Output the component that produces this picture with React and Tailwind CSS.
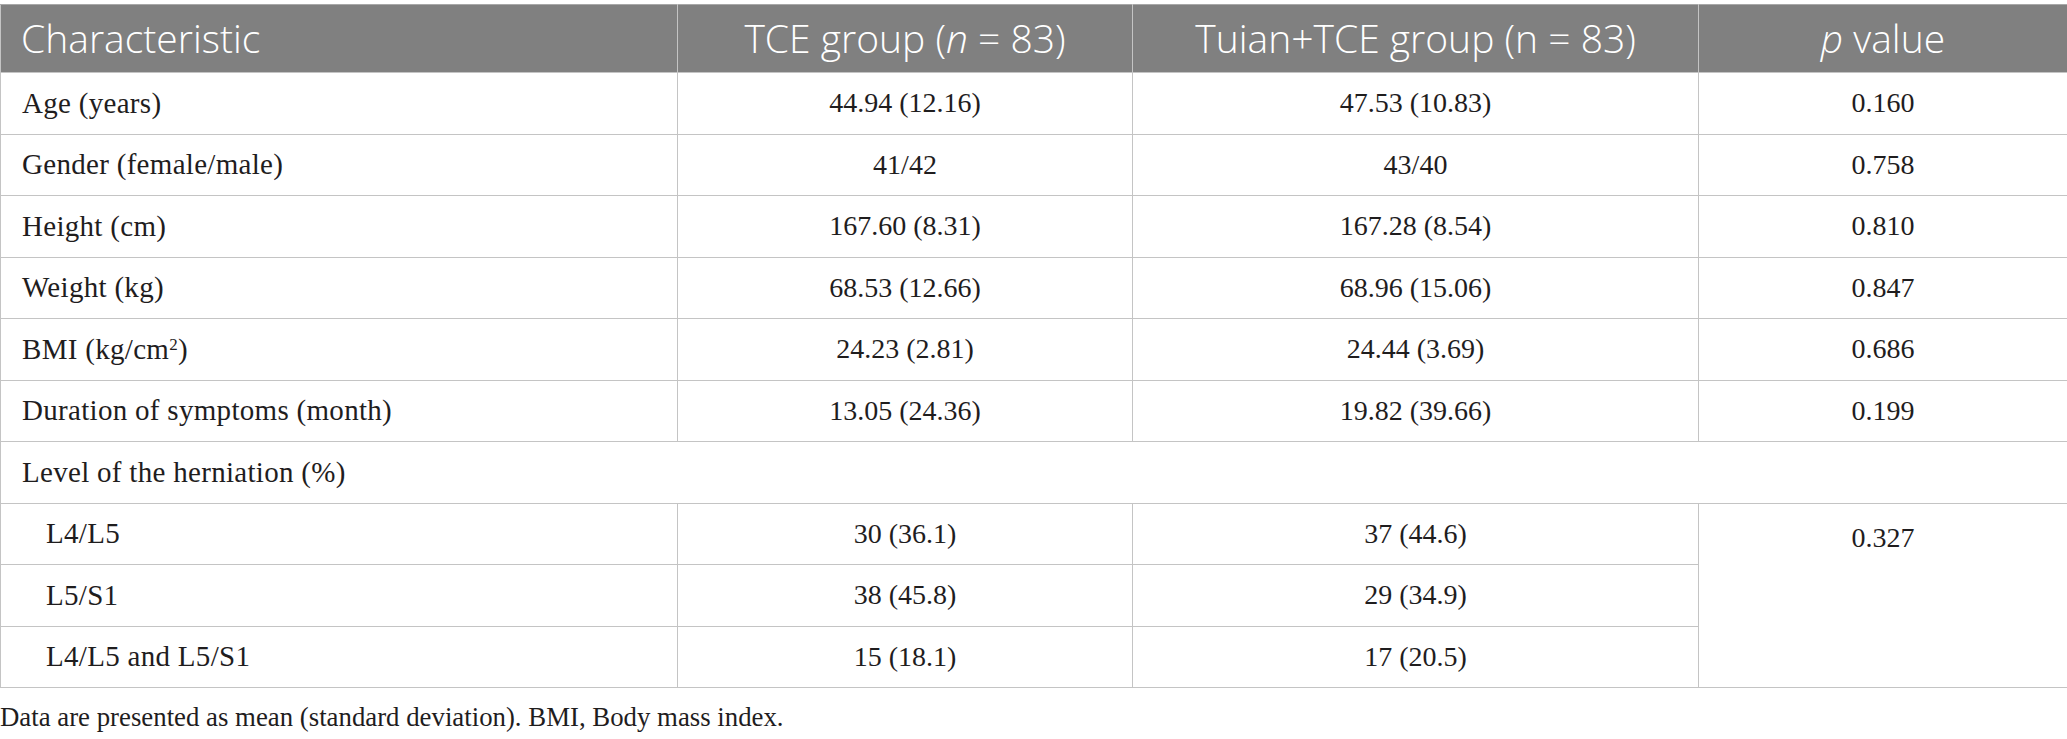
import React from "react";

const rows = [
  ["Age (years)", "44.94 (12.16)", "47.53 (10.83)", "0.160"],
  ["Gender (female/male)", "41/42", "43/40", "0.758"],
  ["Height (cm)", "167.60 (8.31)", "167.28 (8.54)", "0.810"],
  ["Weight (kg)", "68.53 (12.66)", "68.96 (15.06)", "0.847"],
  [
    <>
      BMI (kg/cm<sup className="text-[17px]">2</sup>)
    </>,
    "24.23 (2.81)",
    "24.44 (3.69)",
    "0.686",
  ],
  ["Duration of symptoms (month)", "13.05 (24.36)", "19.82 (39.66)", "0.199"],
];

const levels = [
  ["L4/L5", "30 (36.1)", "37 (44.6)"],
  ["L5/S1", "38 (45.8)", "29 (34.9)"],
  ["L4/L5 and L5/S1", "15 (18.1)", "17 (20.5)"],
];

const cell = "border border-[#c4c4c4] h-[61.5px] align-middle";
const label = `${cell} text-[29px] tracking-[0.3px]`;
const th = "border border-[#c4c4c4] border-t-[#a8a8a8] font-light";
const serif = { fontFamily: '"Liberation Serif", serif' };

export default function App() {
  return (
    <div className="w-[2067px] h-[739px] bg-white pt-[4px] text-[#1f1d1e]" style={serif}>
      <table className="w-[2067px] table-fixed border-collapse text-[28px]">
        <colgroup>
          <col className="w-[677px]" />
          <col className="w-[455px]" />
          <col className="w-[566px]" />
          <col className="w-[369px]" />
        </colgroup>
        <thead>
          <tr
            className="h-[68px] bg-[#808080] text-white text-[39px]"
            style={{ fontFamily: '"Open Sans", sans-serif' }}
          >
            <th className={`${th} text-left pl-[20px]`}>Characteristic</th>
            <th className={`${th} text-center`}>
              TCE group (<i>n</i> = 83)
            </th>
            <th className={`${th} text-center`}>Tuian+TCE group (n = 83)</th>
            <th className={`${th} text-center`}>
              <i>p</i> value
            </th>
          </tr>
        </thead>
        <tbody>
          {rows.map((r, i) => (
            <tr key={i}>
              <td className={`${label} pl-[21px]`}>{r[0]}</td>
              <td className={`${cell} text-center`}>{r[1]}</td>
              <td className={`${cell} text-center`}>{r[2]}</td>
              <td className={`${cell} text-center`}>{r[3]}</td>
            </tr>
          ))}
          <tr>
            <td className={`${label} pl-[21px]`} colSpan={4}>
              Level of the herniation (%)
            </td>
          </tr>
          {levels.map((r, i) => (
            <tr key={i}>
              <td className={`${label} pl-[45px]`}>{r[0]}</td>
              <td className={`${cell} text-center`}>{r[1]}</td>
              <td className={`${cell} text-center`}>{r[2]}</td>
              {i === 0 && (
                <td
                  rowSpan={3}
                  className="border border-[#c4c4c4] align-top text-center pt-[13px]"
                >
                  0.327
                </td>
              )}
            </tr>
          ))}
        </tbody>
      </table>
      <p className="text-[26.8px] mt-[16px] leading-none">
        Data are presented as mean (standard deviation). BMI, Body mass index.
      </p>
    </div>
  );
}
